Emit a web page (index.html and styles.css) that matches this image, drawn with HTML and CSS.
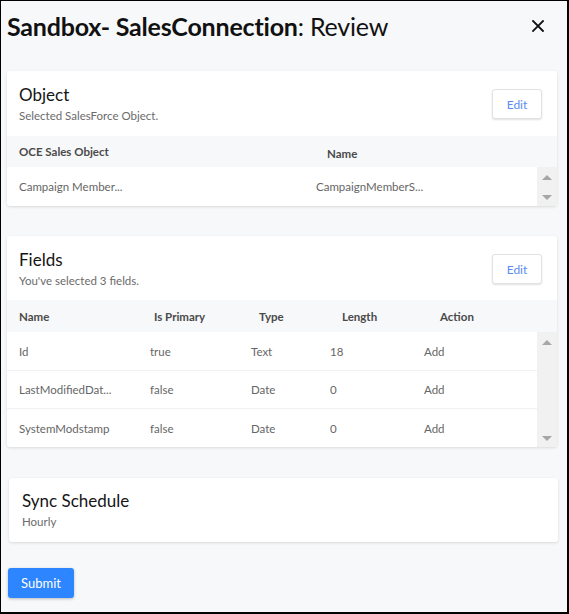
FILE: index.html
```html
<!DOCTYPE html>
<html lang="en">
<head>
<meta charset="utf-8">
<title>Review</title>
<link rel="stylesheet" href="styles.css">
</head>
<body>
<div class="frame">
  <header class="top">
    <h1 class="title"><b>Sandbox- SalesConnection</b>: Review</h1>
    <button class="close" aria-label="Close">
      <svg width="12" height="12" viewBox="0 0 12 12"><path d="M1 1L11 11M11 1L1 11" stroke="#111" stroke-width="1.8" stroke-linecap="square"/></svg>
    </button>
  </header>

  <section class="card card-object">
    <div class="card-head">
      <div>
        <h2 class="card-title">Object</h2>
        <p class="card-sub">Selected SalesForce Object.</p>
      </div>
      <button class="edit">Edit</button>
    </div>
    <div class="thead obj-cols-h">
      <span>OCE Sales Object</span>
      <span class="name-h">Name</span>
    </div>
    <div class="tbody">
      <div class="rows">
        <div class="row obj-cols-b">
          <span>Campaign Member...</span>
          <span>CampaignMemberS...</span>
        </div>
      </div>
      <div class="scrollbar">
        <span class="arrow up"></span>
        <span class="arrow down"></span>
      </div>
    </div>
  </section>

  <section class="card card-fields">
    <div class="card-head">
      <div>
        <h2 class="card-title">Fields</h2>
        <p class="card-sub">You've selected 3 fields.</p>
      </div>
      <button class="edit">Edit</button>
    </div>
    <div class="thead fld-cols-h">
      <span>Name</span>
      <span>Is Primary</span>
      <span>Type</span>
      <span>Length</span>
      <span>Action</span>
    </div>
    <div class="tbody">
      <div class="rows">
        <div class="row fld-cols-b">
          <span>Id</span><span>true</span><span>Text</span><span>18</span><span>Add</span>
        </div>
        <div class="row fld-cols-b">
          <span>LastModifiedDat...</span><span>false</span><span>Date</span><span>0</span><span>Add</span>
        </div>
        <div class="row fld-cols-b">
          <span>SystemModstamp</span><span>false</span><span>Date</span><span>0</span><span>Add</span>
        </div>
      </div>
      <div class="scrollbar">
        <span class="arrow up"></span>
        <span class="arrow down"></span>
      </div>
    </div>
  </section>

  <section class="card card-sync">
    <h2 class="card-title">Sync Schedule</h2>
    <p class="card-sub">Hourly</p>
  </section>

  <button class="submit">Submit</button>
</div>
</body>
</html>
```

FILE: styles.css
```css
* { box-sizing: border-box; }
html, body { margin: 0; padding: 0; }
body {
  font-family: Lato, "Open Sans", sans-serif;
  color: #111;
}
.frame {
  width: 569px;
  height: 614px;
  background: #f7f8fa;
  border-style: solid;
  border-color: #000;
  border-width: 1px 2px 2px 1px;
  overflow: hidden;
}
.top {
  display: flex;
  justify-content: space-between;
  align-items: center;
  height: 50px;
  padding: 0 22px 0 6px;
}
.title {
  margin: 0;
  font-size: 25px;
  font-weight: 400;
  letter-spacing: -0.2px;
  line-height: 32px;
  color: #111;
}
.title b { font-weight: 700; }
.close {
  border: 0;
  background: transparent;
  padding: 0;
  width: 14px;
  height: 14px;
  display: flex;
  align-items: center;
  justify-content: center;
}
.card {
  background: #fff;
  border-radius: 3px;
  box-shadow: 0 1px 3px rgba(0,0,0,0.12);
}
.card-object { margin: 20px 0 0 6px; width: 550px; }
.card-fields { margin: 30px 0 0 6px; width: 550px; }
.card-sync {
  margin: 31px 0 0 8px;
  width: 549px;
  height: 64px;
  padding: 12px 13px;
}
.card-head {
  height: 65px;
  display: flex;
  justify-content: space-between;
  align-items: flex-start;
  padding: 13px 15px 0 12px;
}
.card-fields .card-head { height: 64px; padding-top: 13px; }
.card-title {
  margin: 0;
  font-size: 17px;
  font-weight: 400;
  line-height: 22px;
  color: #151515;
}
.card-sub {
  margin: 3px 0 0;
  font-size: 11.5px;
  line-height: 14px;
  color: #6b6b6b;
}
.edit {
  margin-top: 5px;
  width: 50px;
  height: 30px;
  background: #fff;
  border: 1px solid #e2e2e2;
  border-radius: 3px;
  box-shadow: 0 1px 2px rgba(0,0,0,0.12);
  font-family: inherit;
  font-size: 12px;
  color: #5a8cf0;
}
.thead {
  display: grid;
  align-items: center;
  height: 31px;
  background: #f7f8fa;
  padding-left: 12px;
  font-size: 11.5px;
  font-weight: 700;
  color: #4a4a4a;
}
.card-fields .thead { height: 32px; }
.obj-cols-h { grid-template-columns: 308px 1fr; }
.name-h { padding-top: 3px; }
.fld-cols-h { grid-template-columns: 135px 105px 83px 98px 1fr; }
.tbody { display: flex; }
.rows { flex: 1; }
.row {
  display: grid;
  align-items: center;
  height: 39px;
  padding-left: 12px;
  font-size: 11.5px;
  color: #666;
  border-bottom: 1px solid #f1f1f1;
}
.row:last-child { border-bottom: 0; }
.card-fields .row { height: 38px; }
.card-fields .row:first-child { height: 39px; }
.obj-cols-b { grid-template-columns: 297px 1fr; }
.fld-cols-b { grid-template-columns: 131px 101px 79px 94px 1fr; }
.scrollbar {
  width: 20px;
  background: #f1f1f1;
  display: flex;
  flex-direction: column;
  justify-content: space-between;
  align-items: center;
  padding: 8px 0 6px;
}
.arrow {
  width: 0;
  height: 0;
  border-left: 5px solid transparent;
  border-right: 5px solid transparent;
}
.arrow.up { border-bottom: 5px solid #a6a6a6; }
.arrow.down { border-top: 5px solid #a6a6a6; }
.submit {
  display: block;
  margin: 26px 0 0 7px;
  width: 66px;
  height: 30px;
  background: #2d86ff;
  color: #fff;
  border: 0;
  border-radius: 3px;
  box-shadow: 0 1px 3px rgba(0,0,0,0.25);
  font-family: inherit;
  font-size: 13px;
}
```
